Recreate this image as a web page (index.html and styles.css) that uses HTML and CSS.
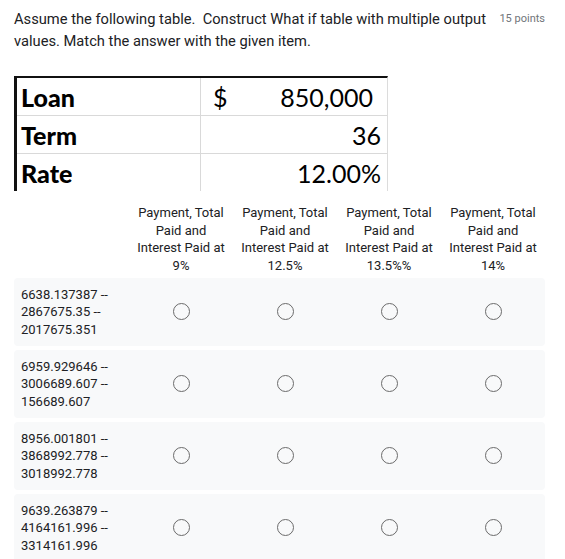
FILE: index.html
```html
<!DOCTYPE html>
<html>
<head>
<meta charset="utf-8">
<link rel="stylesheet" href="styles.css">
</head>
<body>
<div class="page">
  <div class="question">
    <div class="title">Assume the following table.&nbsp; Construct What if table with multiple output values. Match the answer with the given item.</div>
    <div class="points">15 points</div>
  </div>

  <div class="sheet">
    <div class="cell label">Loan</div>
    <div class="cell value money"><span>$</span><span>850,000</span></div>
    <div class="cell label">Term</div>
    <div class="cell value">36</div>
    <div class="cell label last">Rate</div>
    <div class="cell value last">12.00%</div>
  </div>

  <div class="grid">
    <div class="grid-head">
      <div></div>
      <div class="col-head">Payment, Total Paid and Interest Paid at 9%</div>
      <div class="col-head">Payment, Total Paid and Interest Paid at 12.5%</div>
      <div class="col-head">Payment, Total Paid and Interest Paid at 13.5%%</div>
      <div class="col-head">Payment, Total Paid and Interest Paid at 14%</div>
    </div>
    <div class="grid-row">
      <div class="row-label">6638.137387 --<br>2867675.35 --<br>2017675.351</div>
      <div class="opt"><span class="radio"></span></div>
      <div class="opt"><span class="radio"></span></div>
      <div class="opt"><span class="radio"></span></div>
      <div class="opt"><span class="radio"></span></div>
    </div>
    <div class="grid-row">
      <div class="row-label">6959.929646 --<br>3006689.607 --<br>156689.607</div>
      <div class="opt"><span class="radio"></span></div>
      <div class="opt"><span class="radio"></span></div>
      <div class="opt"><span class="radio"></span></div>
      <div class="opt"><span class="radio"></span></div>
    </div>
    <div class="grid-row">
      <div class="row-label">8956.001801 --<br>3868992.778 --<br>3018992.778</div>
      <div class="opt"><span class="radio"></span></div>
      <div class="opt"><span class="radio"></span></div>
      <div class="opt"><span class="radio"></span></div>
      <div class="opt"><span class="radio"></span></div>
    </div>
    <div class="grid-row">
      <div class="row-label">9639.263879 --<br>4164161.996 --<br>3314161.996</div>
      <div class="opt"><span class="radio"></span></div>
      <div class="opt"><span class="radio"></span></div>
      <div class="opt"><span class="radio"></span></div>
      <div class="opt"><span class="radio"></span></div>
    </div>
  </div>
</div>
</body>
</html>
```

FILE: styles.css
```css
html, body {
  margin: 0;
  padding: 0;
  background: #ffffff;
}

.page {
  width: 531px;
  padding: 8px 0 0 14px;
  font-family: Roboto, "Liberation Sans", sans-serif;
  color: #202124;
}

.question {
  display: flex;
  align-items: flex-start;
  gap: 8px;
}

.title {
  flex: 1;
  font-size: 14.7px;
  line-height: 22px;
}

.points {
  font-size: 11px;
  line-height: 22px;
  color: #70757a;
  white-space: nowrap;
}

.sheet {
  margin-top: 24px;
  width: 370px;
  display: grid;
  grid-template-columns: 184px 186px;
  border-top: 2px solid #111111;
  border-left: 3px solid #111111;
  border-right: 1px solid #dcdcdc;
  font-family: Lato, "Liberation Sans", sans-serif;
  font-size: 25px;
  color: #000000;
}

.cell {
  height: 37px;
  display: flex;
  align-items: center;
  border-bottom: 1px solid #d9d9d9;
}

.cell.last {
  border-bottom: none;
}

.label {
  font-weight: 900;
  padding-left: 4px;
  border-right: 1px solid #d9d9d9;
}

.value {
  justify-content: flex-end;
  padding-right: 6px;
}

.money {
  justify-content: space-between;
  padding-left: 12px;
  padding-right: 14px;
}

.grid {
  margin-top: 13px;
  display: flex;
  flex-direction: column;
  gap: 4px;
}

.grid-head,
.grid-row {
  display: grid;
  grid-template-columns: 115px repeat(4, 104px);
  font-size: 13px;
  line-height: 17.7px;
}

.col-head {
  text-align: center;
  padding: 0 4px;
}

.grid-head {
  margin-bottom: -1px;
}

.grid-row {
  background: #f8f9fa;
  border-radius: 4px;
  height: 68px;
  align-items: center;
}

.row-label {
  padding-left: 7px;
  line-height: 17.5px;
}

.opt {
  display: flex;
  justify-content: center;
  align-items: center;
}

.radio {
  width: 15px;
  height: 15px;
  border: 1.5px solid #6b6b6b;
  border-radius: 50%;
  display: block;
}
```
